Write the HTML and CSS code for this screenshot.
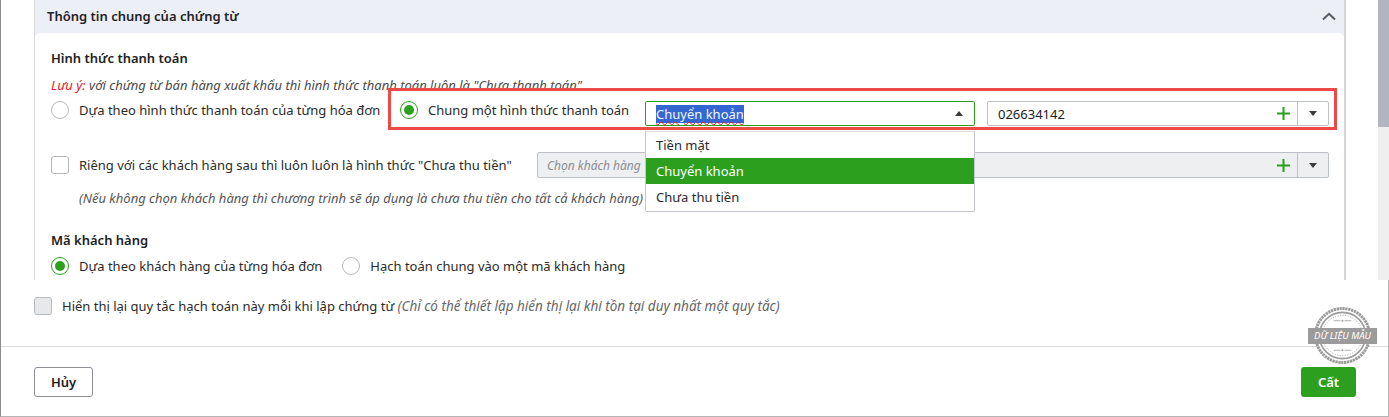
FILE: index.html
```html
<!DOCTYPE html>
<html lang="vi">
<head>
<meta charset="utf-8">
<title>Thông tin chung của chứng từ</title>
<link rel="stylesheet" href="styles.css">
</head>
<body>
<div class="dialog">
  <div class="scroller">
    <section class="panel">
      <header class="panel-head">
        <span>Thông tin chung của chứng từ</span>
        <svg class="chev" width="14" height="9" viewBox="0 0 14 9"><path d="M1 7.500 7 1.800l6 5.700" fill="none" stroke="#555a60" stroke-width="2"/></svg>
      </header>
      <div class="panel-body">
        <h3 class="label first">Hình thức thanh toán</h3>
        <p class="note"><em class="red">Lưu ý:</em> <em>với chứng từ bán hàng xuất khẩu thì hình thức thanh toán luôn là "Chưa thanh toán"</em></p>
        <div class="row pay">
          <span class="radio"></span><span class="txt t1">Dựa theo hình thức thanh toán của từng hóa đơn</span>
          <span class="radio on r2"></span><span class="txt t2">Chung một hình thức thanh toán</span>
          <div class="select open">
            <span class="sel-text">Chuyển khoản</span>
            <span class="caret up"></span>
            <ul class="menu">
              <li>Tiền mặt</li>
              <li class="active">Chuyển khoản</li>
              <li>Chưa thu tiền</li>
            </ul>
          </div>
          <div class="combo c-acc">
            <span class="combo-text">026634142</span>
            <svg class="plus" width="13" height="13" viewBox="0 0 13 13"><path d="M6.500 0v13M0 6.500h13" stroke="#2c9f1f" stroke-width="2"/></svg>
            <span class="combo-btn"><span class="caret"></span></span>
          </div>
        </div>
        <div class="row cust">
          <span class="check"></span><span class="txt t3">Riêng với các khách hàng sau thì luôn luôn là hình thức "Chưa thu tiền"</span>
          <div class="combo disabled">
            <span class="combo-text"><span class="ph">Chọn khách hàng</span></span>
            <svg class="plus" width="13" height="13" viewBox="0 0 13 13"><path d="M6.500 0v13M0 6.500h13" stroke="#2c9f1f" stroke-width="2"/></svg>
            <span class="combo-btn"><span class="caret"></span></span>
          </div>
        </div>
        <p class="hint"><em>(Nếu không chọn khách hàng thì chương trình sẽ áp dụng là chưa thu tiền cho tất cả khách hàng)</em></p>
        <h3 class="label second">Mã khách hàng</h3>
        <div class="row code">
          <span class="radio on"></span><span class="txt t4">Dựa theo khách hàng của từng hóa đơn</span>
          <span class="radio"></span><span class="txt">Hạch toán chung vào một mã khách hàng</span>
        </div>
      </div>
    </section>
    <div class="scrollbar"><div class="thumb"></div></div>
    <div class="red-box"></div>
  </div>
  <div class="show-row">
    <span class="check grey"></span>
    <span class="txt">Hiển thị lại quy tắc hạch toán này mỗi khi lập chứng từ <em class="muted">(Chỉ có thể thiết lập hiển thị lại khi tồn tại duy nhất một quy tắc)</em></span>
  </div>
  <footer class="footer">
    <button class="btn">Hủy</button>
    <button class="btn primary">Cất</button>
    <div class="stamp">
      <svg width="57" height="57" viewBox="0 0 58 58">
        <circle cx="29" cy="29" r="27.500" fill="#fff" stroke="#9b9b9b" stroke-width="3" stroke-dasharray="2.400 .6"/>
        <circle cx="29" cy="29" r="23.500" fill="none" stroke="#9b9b9b" stroke-width="1.600"/>
        <circle cx="29" cy="29" r="20.500" fill="none" stroke="#9b9b9b" stroke-width="1" stroke-dasharray="1 1.600"/>
        <path d="M20 14h7M31 14h7M20 44h7M31 44h7" stroke="#9b9b9b" stroke-width=".8"/>
        <circle cx="29" cy="14" r="1" fill="#9b9b9b"/>
        <circle cx="29" cy="44" r="1" fill="#9b9b9b"/>
      </svg>
      <span class="stamp-text">DỮ LIỆU MẪU</span>
    </div>
  </footer>
</div>
</body>
</html>
```
FILE: styles.css
```css
* { box-sizing: border-box; }
html, body { margin: 0; height: 417px; overflow: hidden; background: #fff; }
body { font-family: "Noto Sans", "Open Sans", sans-serif; font-size: 13px; color: #212121; }
.dialog { height: 417px; border-left: 1px solid #8b8b8b; border-right: 1px solid #b5b5b5; border-bottom: 1px solid #b5b5b5; display: flex; flex-direction: column; position: relative; }
.scroller { height: 280px; display: flex; padding-left: 33px; position: relative; flex: none; }
.panel { width: 1312px; height: 280px; border-left: 1px solid #dcdcdc; border-right: 2px solid #d6d6d6; background: #eceff5; overflow: hidden; flex: none; }
.panel-head { height: 33px; display: flex; align-items: center; justify-content: space-between; padding: 0 8px 2px 12px; font-weight: 600; font-size: 13px; color: #1f2229; }
.chev { margin-top: 2px; }
.panel-body { height: 247px; background: #fff; border-radius: 5px 5px 0 0; padding-left: 16px; }
.label { margin: 0; font-size: 13px; font-weight: 600; line-height: 18px; color: #212121; }
.label.first { padding-top: 16px; box-sizing: content-box; height: 18px; }
.label.second { margin-top: 24px; }
.note { margin: 9px 0 0; line-height: 18px; font-size: 13px; height: 18px; color: #4b4b4b; white-space: nowrap; }
.red { color: #e8202a; }
.row { display: flex; align-items: center; white-space: nowrap; }
.txt { color: #2b2b2b; line-height: 18px; }
.pay { height: 25px; margin-top: 7px; padding-right: 16px; align-items: flex-start; }
.radio { width: 18px; height: 18px; border-radius: 50%; border: 1px solid #b5b8bd; background: #fff; flex: none; margin-right: 10px; position: relative; }
.radio.on { border-color: #2c9f1f; }
.radio.on::after { content: ""; position: absolute; left: 3px; top: 3px; width: 10px; height: 10px; border-radius: 50%; background: #2c9f1f; }
.r2 { margin-left: 20px; }
.t1 { width: 301px; flex: none; }
.t2 { width: 217px; flex: none; }
.select { width: 330px; height: 25px; border: 1px solid #2c9f1f; border-radius: 2px; flex: none; position: relative; display: flex; align-items: center; justify-content: space-between; padding: 0 11px 0 10px; background: #fff; }
.sel-text { background: #3367d1; color: #f2f6ff; line-height: 18px; text-decoration: underline wavy #e02020 1px; text-underline-offset: 2px; }
.caret { width: 0; height: 0; border-left: 4px solid transparent; border-right: 4px solid transparent; border-top: 5px solid #3c3c3c; display: block; }
.caret.up { border-top: 0; border-bottom: 5px solid #3c3c3c; }
.menu { list-style: none; margin: 0; padding: 0 0 1px; position: absolute; z-index: 5; left: -1px; top: 29px; width: 330px; background: #fff; border: 1px solid #c3c6cc; border-top-color: #dcdcdc; border-radius: 0 0 2px 2px; }
.menu li { height: 26px; line-height: 26px; padding-left: 10px; color: #2b2b2b; }
.menu li.active { background: #2c9f1f; color: #fff; }
.combo { height: 25px; border: 1px solid #bcc0c7; border-radius: 2px; display: flex; align-items: center; background: #fff; flex: none; position: relative; }
.c-acc { width: 342px; margin-left: 12px; }
.combo-text { flex: 1; padding-left: 10px; }
.ph { font-style: italic; font-size: 12px; color: #8a8d92; margin-left: -1px; }
.plus { margin-right: 7px; }
.combo-btn { width: 31px; height: 23px; border-left: 1px solid #bcc0c7; display: flex; align-items: center; justify-content: center; }
.cust { height: 26px; margin-top: 26px; }
.check { width: 18px; height: 18px; border: 1px solid #b5b8bd; border-radius: 3px; background: #fff; flex: none; margin-right: 10px; }
.check.grey { background: #e6e8ec; }
.t3 { width: 458px; flex: none; }
.disabled { width: 792px; height: 26px; background: #eeeff1; }
.disabled .combo-btn { height: 24px; }
.hint { margin: 11px 0 0 28px; font-size: 13px; line-height: 18px; height: 18px; color: #555; white-space: nowrap; }
.code { height: 18px; margin-top: 8px; }
.t4 { margin-right: 20px; }
.scrollbar { width: 11px; height: 280px; margin-left: 32px; background: #efefef; flex: none; }
.thumb { height: 127px; background: #b1b5bf; }
.red-box { position: absolute; left: 387px; top: 88px; width: 949px; height: 42px; border: 3px solid #ee4a45; pointer-events: none; z-index: 4; }
.show-row { height: 66px; padding: 17px 0 0 33px; display: flex; align-items: flex-start; white-space: nowrap; line-height: 18px; flex: none; }
.muted { font-size: 13.500px; color: #666; }
.footer { flex: 1; border-top: 1px solid #dcdcdc; position: relative; display: flex; justify-content: space-between; align-items: flex-start; padding: 20px 32px 0 33px; }
.btn { width: 59px; height: 30px; border: 1px solid #8d8f94; border-radius: 3px; background: #fff; font: 600 13px "Noto Sans", sans-serif; color: #212121; padding: 0; }
.btn.primary { width: 55px; border: 0; background: #2c9f1f; color: #fff; }
.stamp { position: absolute; right: 17px; top: -40px; width: 57px; height: 57px; }
.stamp svg { display: block; }
.stamp-text { position: absolute; left: -6px; top: 21px; width: 69px; height: 16px; background: #9b9b9b; color: #fff; font-size: 9.500px; font-style: italic; line-height: 16px; text-align: center; white-space: nowrap; }
```
